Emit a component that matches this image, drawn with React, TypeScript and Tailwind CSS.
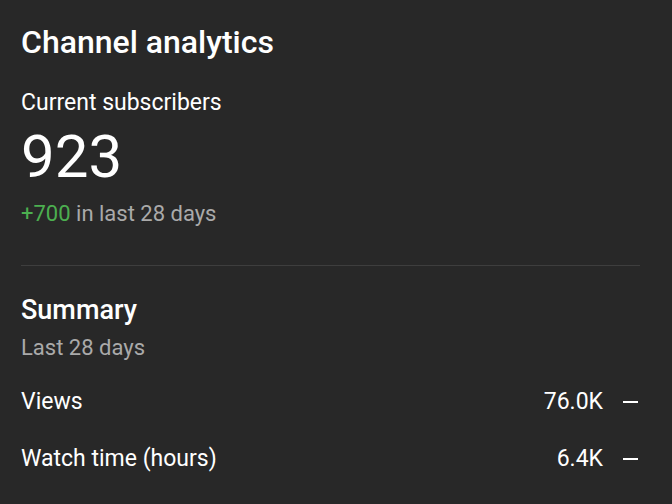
const rows = [
  { label: "Views", value: "76.0K" },
  { label: "Watch time (hours)", value: "6.4K" },
];

export default function App() {
  return (
    <div className="min-h-[504px] w-[672px] bg-[#282828] px-[21px] pt-[22px] text-white [font-family:Roboto,'Noto_Sans',sans-serif]">
      <h1 className="text-[32px] font-medium leading-[40px]">Channel analytics</h1>

      <div className="mt-[27px] text-[23px] leading-[28px]">Current subscribers</div>
      <div className="mt-[7px] text-[60px] leading-[66px]">923</div>
      <div className="mt-[10px] text-[22px] leading-[28px] text-[#aaaaaa]">
        <span className="text-[#4caf50]">+700</span> in last 28 days
      </div>

      <div className="mr-[11px] mt-[37px] h-px bg-[#3e3e3e]" />

      <h2 className="mt-[27px] text-[27px] font-medium leading-[34px]">Summary</h2>
      <div className="mt-[7px] text-[22px] leading-[28px] text-[#aaaaaa]">Last 28 days</div>

      <div className="mt-[11px] flex flex-col">
        {rows.map((r) => (
          <div key={r.label} className="flex h-[57px] items-center justify-between text-[23px] leading-[28px]">
            <span>{r.label}</span>
            <span className="flex items-center gap-[20px]">
              {r.value}
              <span className="mr-[13px] h-[2px] w-[15px] bg-white" />
            </span>
          </div>
        ))}
      </div>
    </div>
  );
}
